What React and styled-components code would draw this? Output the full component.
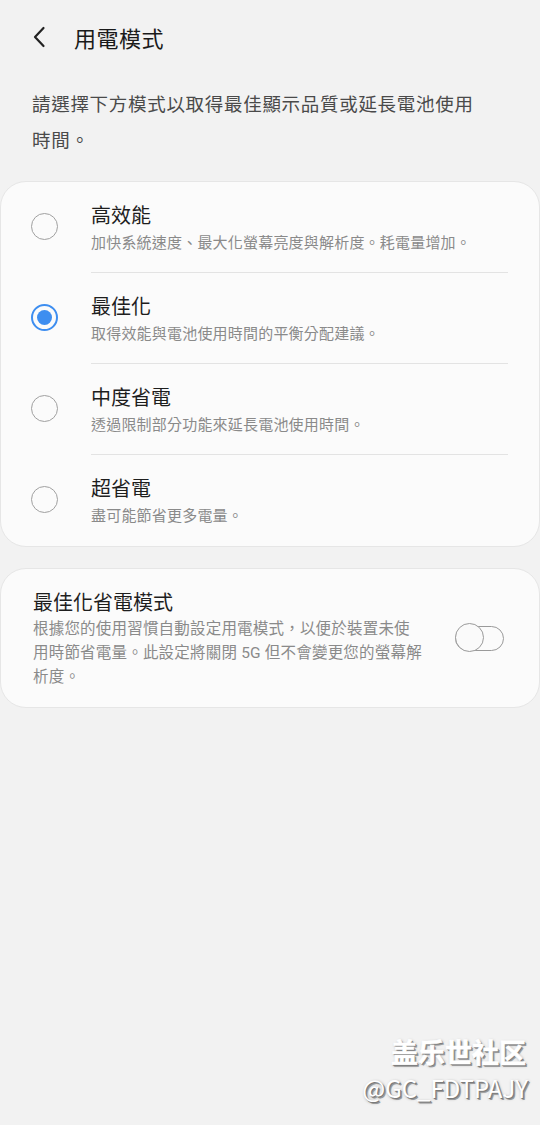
import React, { useState } from "react";
import styled, { createGlobalStyle } from "styled-components";

const GlobalStyle = createGlobalStyle`
  html, body {
    margin: 0;
    padding: 0;
    background: #f2f2f2;
  }
  body {
    font-family: Roboto, "Noto Sans CJK TC", sans-serif;
  }
`;

const modes = [
  { title: "高效能", desc: "加快系統速度、最大化螢幕亮度與解析度。耗電量增加。" },
  { title: "最佳化", desc: "取得效能與電池使用時間的平衡分配建議。" },
  { title: "中度省電", desc: "透過限制部分功能來延長電池使用時間。" },
  { title: "超省電", desc: "盡可能節省更多電量。" },
];

const adaptiveLines = [
  "根據您的使用習慣自動設定用電模式，以便於裝置未使",
  "用時節省電量。此設定將關閉 5G 但不會變更您的螢幕解",
  "析度。",
];

const App = () => {
  const [selected, setSelected] = useState(1);
  const [adaptive, setAdaptive] = useState(false);

  return (
    <Page>
      <GlobalStyle />
      <Header>
        <BackButton aria-label="back">
          <svg width="18" height="22" viewBox="0 0 18 22" fill="none">
            <path d="M12.5 2 L4 11 L12.5 20" stroke="#222" strokeWidth="2.2" strokeLinecap="round" strokeLinejoin="round" />
          </svg>
        </BackButton>
        <Title>用電模式</Title>
      </Header>

      <Intro>請選擇下方模式以取得最佳顯示品質或延長電池使用時間。</Intro>

      <Card>
        {modes.map((m, i) => (
          <ModeRow key={m.title} onClick={() => setSelected(i)}>
            <Radio $checked={selected === i} />
            <ModeText $last={i === modes.length - 1}>
              <ModeTitle>{m.title}</ModeTitle>
              <ModeDesc>{m.desc}</ModeDesc>
            </ModeText>
          </ModeRow>
        ))}
      </Card>

      <Card $second>
        <AdaptiveRow onClick={() => setAdaptive(!adaptive)}>
          <AdaptiveText>
            <AdaptiveTitle>最佳化省電模式</AdaptiveTitle>
            <AdaptiveDesc>
              {adaptiveLines.map((line) => (
                <div key={line}>{line}</div>
              ))}
            </AdaptiveDesc>
          </AdaptiveText>
          <Switch $on={adaptive}>
            <Knob $on={adaptive} />
          </Switch>
        </AdaptiveRow>
      </Card>

      <Watermark>
        <WmLine $big>盖乐世社区</WmLine>
        <WmLine>@GC_FDTPAJY</WmLine>
      </Watermark>
    </Page>
  );
};

export default App;

const Page = styled.div`
  position: relative;
  width: 540px;
  height: 1125px;
  background: #f2f2f2;
  overflow: hidden;
`;

const Header = styled.div`
  display: flex;
  align-items: center;
  height: 73px;
  padding-left: 31px;
`;

const BackButton = styled.div`
  display: flex;
  align-items: center;
  width: 43px;
`;

const Title = styled.div`
  font-size: 22px;
  color: #1a1a1a;
  letter-spacing: 0.5px;
`;

const Intro = styled.div`
  padding: 14px 60px 0 32px;
  font-size: 18.5px;
  line-height: 36px;
  color: #4a4a4a;
  letter-spacing: 0.7px;
  height: 94px;
`;

const Card = styled.div`
  margin-top: ${(p) => (p.$second ? "21px" : "0")};
  background: #fbfbfb;
  border: 1px solid #e6e6e6;
  border-radius: 26px;
`;

const ModeRow = styled.div`
  display: flex;
  align-items: stretch;
  padding-left: 30px;
  cursor: pointer;
`;

const Radio = styled.div`
  box-sizing: border-box;
  flex: none;
  width: 27px;
  height: 27px;
  margin-top: 31px;
  margin-right: 33px;
  border-radius: 50%;
  border: ${(p) => (p.$checked ? "2px solid #3e8ef0" : "1.5px solid #a0a0a0")};
  display: flex;
  align-items: center;
  justify-content: center;

  &::after {
    content: "";
    display: ${(p) => (p.$checked ? "block" : "none")};
    width: 15px;
    height: 15px;
    border-radius: 50%;
    background: #3e8ef0;
  }
`;

const ModeText = styled.div`
  flex: 1;
  margin-right: 31px;
  height: 91px;
  box-sizing: border-box;
  padding-top: 21px;
  border-bottom: ${(p) => (p.$last ? "none" : "1px solid #e3e3e3")};
`;

const ModeTitle = styled.div`
  font-size: 20px;
  line-height: 26px;
  color: #1e1e1e;
`;

const ModeDesc = styled.div`
  margin-top: 4px;
  font-size: 15px;
  line-height: 20px;
  letter-spacing: 0.2px;
  color: #8a8a8a;
`;

const AdaptiveRow = styled.div`
  display: flex;
  align-items: center;
  padding: 20px 35px 18px 32px;
  cursor: pointer;
`;

const AdaptiveText = styled.div`
  flex: 1;
  padding-right: 10px;
  white-space: nowrap;
`;

const AdaptiveTitle = styled.div`
  font-size: 20px;
  line-height: 28px;
  color: #1e1e1e;
`;

const AdaptiveDesc = styled.div`
  font-size: 15.5px;
  line-height: 24px;
  letter-spacing: 0.2px;
  color: #8a8a8a;
`;

const Switch = styled.div`
  position: relative;
  flex: none;
  box-sizing: border-box;
  width: 49px;
  height: 25px;
  border-radius: 13px;
  border: 1.5px solid #9a9a9a;
  background: ${(p) => (p.$on ? "#3e8ef0" : "transparent")};
  margin-top: -2px;
`;

const Knob = styled.div`
  position: absolute;
  box-sizing: border-box;
  top: -3.5px;
  left: ${(p) => (p.$on ? "20px" : "-1.5px")};
  width: 29px;
  height: 29px;
  border-radius: 50%;
  border: 1.5px solid #9a9a9a;
  background: #fafafa;
`;

const Watermark = styled.div`
  position: absolute;
  right: 12px;
  bottom: 20px;
  text-align: right;
  font-family: "Noto Sans CJK SC", sans-serif;
  color: #ffffff;
  text-shadow: 1px 1px 0 #7a7a7a, 2px 2px 0 #9a9a9a, 1px 1px 3px rgba(0, 0, 0, 0.35);
`;

const WmLine = styled.div`
  font-size: ${(p) => (p.$big ? "27px" : "24px")};
  line-height: ${(p) => (p.$big ? "38px" : "34px")};
  font-weight: ${(p) => (p.$big ? 700 : 400)};
  -webkit-text-stroke: ${(p) => (p.$big ? "0.6px #ffffff" : "0")};
  margin-right: ${(p) => (p.$big ? "2px" : "0")};
`;
